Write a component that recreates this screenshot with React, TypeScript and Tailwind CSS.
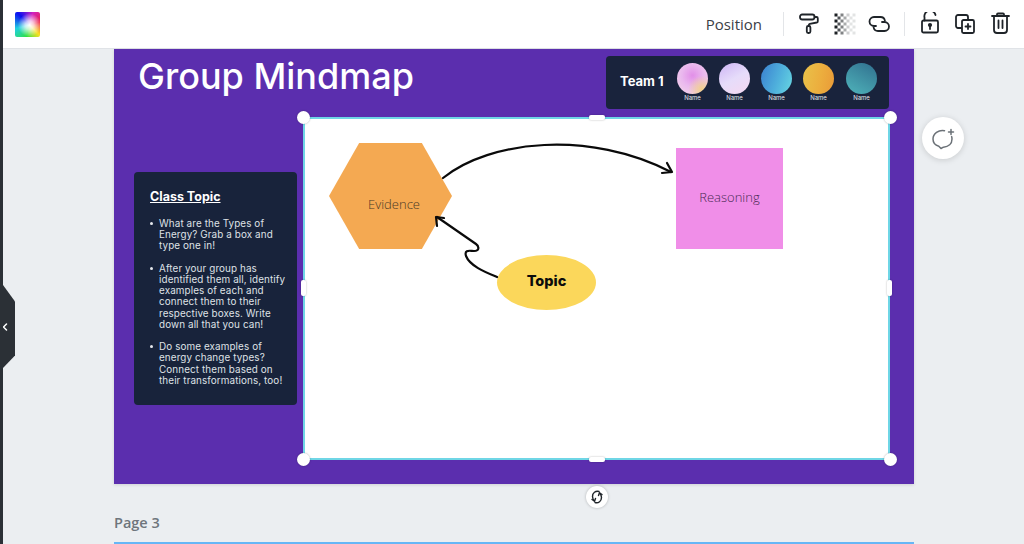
import React from "react";

const people = [
  "bg-[radial-gradient(circle_at_80%_85%,#f2d08a_0%,transparent_38%),radial-gradient(circle_at_50%_40%,#e28fe8_0%,#eab8ee_45%,#f5d9e8_100%)]",
  "bg-[linear-gradient(150deg,#cdb4f5_0%,#e6dcfa_50%,#f6d8f0_100%)]",
  "bg-[linear-gradient(110deg,#3a7fd0_0%,#4fb0dc_55%,#68d8e2_100%)]",
  "bg-[linear-gradient(100deg,#e9c24a_0%,#ecae3e_55%,#e99a38_100%)]",
  "bg-[linear-gradient(30deg,#4fb4bb_0%,#3d8ba0_60%,#2f6e8e_100%)]",
];

const bullets = [
  "What are the Types of Energy? Grab a box and type one in!",
  "After your group has identified them all, identify examples of each and connect them to their respective boxes. Write down all that you can!",
  "Do some examples of energy change types? Connect them based on their transformations, too!",
];

function Checker() {
  const cells: [number, number, number][] = [];
  for (let r = 0; r < 7; r++) {
    for (let c = 0; c < 7; c++) {
      if ((r + c) % 2 === 0) cells.push([c, r, Math.max(0.12, Math.pow(1 - c / 6.5, 1.6))]);
    }
  }
  return (
    <svg width="24" height="24" viewBox="0 0 24 24">
      {cells.map(([c, r, o]) => (
        <rect key={`${c}-${r}`} x={1.5 + c * 3} y={1.5 + r * 3} width="3" height="3" fill="#1c2024" opacity={o} />
      ))}
    </svg>
  );
}

const iconStroke = { fill: "none", stroke: "#1f2429", strokeWidth: 1.8, strokeLinecap: "round", strokeLinejoin: "round" } as const;

export default function App() {
  return (
    <div className="flex h-[544px] w-[1024px] overflow-hidden bg-[#ebeef1] font-['Open_Sans',sans-serif]">
      <div className="w-[3px] shrink-0 bg-[#2b3036]" />
      <div className="relative flex min-w-0 flex-1 flex-col">
        <header className="flex h-[49px] shrink-0 items-center border-b border-[#e0e3e7] bg-white pl-3 pr-3">
          <div className="h-[25px] w-[25px] rounded-[2px] bg-[radial-gradient(circle_at_58%_52%,#ffffff_0%,rgba(255,255,255,0.75)_22%,transparent_60%),conic-gradient(from_315deg_at_58%_52%,#0a10f0,#d020c0,#f02040,#f8e020,#30e040,#20d0e0,#0a10f0)]" />
          <div className="ml-auto flex items-center">
            <span className="text-[15px] font-medium leading-6 text-[#3b4046]">Position</span>
            <div className="ml-[21px] h-[24px] w-px bg-[#e3e5e8]" />
            <svg className="ml-[13px]" width="24" height="24" viewBox="0 0 24 24" {...iconStroke}>
              <rect x="3" y="2.500" width="14.500" height="5" rx="2.200" />
              <path d="M17.500 5h2a1.300 1.300 0 0 1 1.300 1.300v2.900a1.300 1.300 0 0 1-1 1.300l-7 1.300a1.300 1.300 0 0 0-1 1.200v.8" />
              <rect x="9.800" y="14" width="3.600" height="7" rx="1.500" />
            </svg>
            <div className="ml-3">
              <Checker />
            </div>
            <svg className="ml-[11px]" width="24" height="24" viewBox="0 0 24 24" {...iconStroke}>
              <path d="M8 14H6a4.500 4.500 0 0 1 0-9h6.500a4.500 4.500 0 0 1 4.400 3.600" />
              <path d="M14 10h2.500a4.500 4.500 0 0 1 0 9H10a4.500 4.500 0 0 1-4.400-3.600" />
            </svg>
            <div className="ml-3 h-[24px] w-px bg-[#e3e5e8]" />
            <svg className="ml-[13px]" width="24" height="24" viewBox="0 0 24 24" {...iconStroke}>
              <path d="M6.500 8.500V5.500A5.500 5.500 0 0 1 17.500 3" />
              <rect x="4" y="8.500" width="16" height="12" rx="1.500" />
              <circle cx="12" cy="13" r="1.200" fill="#1f2429" />
              <path d="M12 13.500v3.500" />
            </svg>
            <svg className="ml-[11px]" width="24" height="24" viewBox="0 0 24 24" {...iconStroke}>
              <path d="M8 16H5a2 2 0 0 1-2-2V5a2 2 0 0 1 2-2h8a2 2 0 0 1 2 2v3" />
              <rect x="9" y="8" width="12" height="13" rx="1.500" />
              <path d="M15 12v5M12.500 14.500h5" />
            </svg>
            <svg className="ml-[11px]" width="24" height="24" viewBox="0 0 24 24" {...iconStroke}>
              <path d="M4 4h17M9 3.500V2.500a1 1 0 0 1 1-1h5a1 1 0 0 1 1 1v1" />
              <path d="M6 4v14a3 3 0 0 0 3 3h7a3 3 0 0 0 3-3V4" />
              <path d="M10.500 8.500v7.500M14.500 8.500v7.500" />
            </svg>
          </div>
        </header>

        <main className="flex flex-1 flex-col pl-[111px]">
          <section className="relative h-[435px] w-[800px] shrink-0 bg-[#5b2eae] pl-5 pr-[25px] pt-[7px] shadow-[0_1px_3px_rgba(0,0,0,0.12)]">
            <div className="flex h-[53px] items-start justify-between">
              <h1 className="ml-1 mt-[-2px] font-['Inter',sans-serif] text-[36px] font-medium leading-[44px] text-white">
                Group Mindmap
              </h1>
              <div className="flex h-[53px] w-[283px] items-start rounded-[4px] bg-[#19233c] pl-[14px] pt-[7px]">
                <span className="mt-[10px] w-[43px] whitespace-nowrap font-['Inter',sans-serif] text-[13px] font-bold leading-4 text-white">
                  Team 1
                </span>
                <div className="ml-[14px] flex gap-[11px]">
                  {people.map((p, i) => (
                    <div key={i} className={`flex w-[31px] flex-col items-center ${i === 4 ? "ml-[1px]" : ""}`}>
                      <div className={`h-[31px] w-[31px] rounded-full ${p}`} />
                      <span className="font-['Inter',sans-serif] text-[6px] leading-2 text-[#e6e8ec]">Name</span>
                    </div>
                  ))}
                </div>
              </div>
            </div>

            <div className="mt-2 flex items-start gap-[6px]">
              <aside className="mt-[55px] h-[233px] w-[163px] shrink-0 rounded-[4px] bg-[#18233b] pl-4 pr-2 pt-[17px]">
                <h2 className="font-['Inter',sans-serif] text-[12.500px] font-bold leading-4 text-white underline">Class Topic</h2>
                <ul className="mt-[13px] flex flex-col gap-[11.200px] font-['Inter',sans-serif] text-[9.900px] leading-[11.200px] tracking-[0.100px] text-[#dfe1e6]">
                  {bullets.map((b) => (
                    <li key={b} className="relative pl-[9px] before:absolute before:left-0 before:top-1 before:h-[3px] before:w-[3px] before:rounded-full before:bg-[#e6e8ec]">
                      {b}
                    </li>
                  ))}
                </ul>
              </aside>

              <div className="relative h-[343px] w-[587px] shrink-0 border-2 border-[#6fd6e6] bg-white">
                {/* free canvas of the mind map: offsets are from the board's padding box */}
                <div className="absolute left-[24px] top-[24px] flex h-[106px] w-[123px] items-center justify-center bg-[#f4a952] text-[13px] font-light text-[#4a3a26] [clip-path:polygon(24.500%_0,75.500%_0,100%_50%,75.500%_100%,24.500%_100%,0_50%)]">
                  <span className="ml-[7px] mt-[17px]">Evidence</span>
                </div>
                <div className="absolute left-[371px] top-[29px] flex h-[101px] w-[107px] items-center justify-center bg-[#f08ee8] pb-[1px] text-[13px] font-light text-[#4a2b55]">
                  Reasoning
                </div>
                <div className="absolute left-[192px] top-[136px] flex h-[55px] w-[99px] items-center justify-center rounded-[50%] bg-[#fbd75b] pb-[3px] font-['Inter',sans-serif] text-[14.500px] font-extrabold text-[#0c0c0c]">
                  Topic
                </div>
                <svg className="absolute left-[-2px] top-[-2px]" width="587" height="343" viewBox="303 117 587 343" fill="none" stroke="#0a0a0a" strokeWidth="2.200" strokeLinecap="round" strokeLinejoin="round">
                  <path d="M443 178C490 140 590 130 671 172" />
                  <path d="M667 163L672 172L662 173" />
                  <path d="M497 277C485 272 470 266 466 256C464 249 470 251 474 251C480 251 479 246 476 244L437 217" />
                  <path d="M437 226L436 217L444 218" />
                </svg>
              </div>
            </div>

            {/* selection handles lying over the slide */}
            <span className="absolute left-[183px] top-[62px] h-[13px] w-[13px] rounded-full bg-white shadow-[0_0_2px_rgba(0,0,0,0.3)]" />
            <span className="absolute left-[770px] top-[62px] h-[13px] w-[13px] rounded-full bg-white shadow-[0_0_2px_rgba(0,0,0,0.3)]" />
            <span className="absolute left-[183px] top-[404px] h-[13px] w-[13px] rounded-full bg-white shadow-[0_0_2px_rgba(0,0,0,0.3)]" />
            <span className="absolute left-[770px] top-[404px] h-[13px] w-[13px] rounded-full bg-white shadow-[0_0_2px_rgba(0,0,0,0.3)]" />
            <span className="absolute left-[475px] top-[66px] h-[5px] w-4 rounded-[2px] bg-white shadow-[0_0_2px_rgba(0,0,0,0.3)]" />
            <span className="absolute left-[475px] top-[408px] h-[5px] w-4 rounded-[2px] bg-white shadow-[0_0_2px_rgba(0,0,0,0.3)]" />
            <span className="absolute left-[187px] top-[231px] h-4 w-[5px] rounded-[2px] bg-white shadow-[0_0_2px_rgba(0,0,0,0.3)]" />
            <span className="absolute left-[773px] top-[231px] h-4 w-[5px] rounded-[2px] bg-white shadow-[0_0_2px_rgba(0,0,0,0.3)]" />

            <button className="absolute left-[472px] top-[437px] flex h-[22px] w-[22px] items-center justify-center rounded-full bg-white shadow-[0_0_3px_rgba(0,0,0,0.25)]">
              <svg width="16" height="16" viewBox="0 0 16 16" fill="none" stroke="#1f2429" strokeWidth="1.400" strokeLinecap="round" strokeLinejoin="round">
                <path d="M10 2.500C6.500 1.500 3.500 4 3.500 7.500C3.500 9.500 4.500 11 5.500 12" />
                <path d="M6 13.500C9.500 14.500 12.500 12 12.500 8.500C12.500 6.500 11.500 5 10.500 4" />
                <path d="M3 10.500L5.500 12.200L6.500 9.500M13 5.500L10.500 3.800L9.500 6.500" />
              </svg>
            </button>
            <button className="absolute left-[808px] top-[68px] flex h-[42px] w-[42px] items-center justify-center rounded-full bg-white shadow-[0_1px_6px_rgba(0,0,0,0.15)]">
              <svg width="24" height="24" viewBox="0 0 24 24" fill="none" stroke="#6b7177" strokeWidth="1.500" strokeLinecap="round" strokeLinejoin="round">
                <path d="M13.500 4.700A9.500 8.500 0 0 0 2 13c0 3.600 2.500 6.300 5.800 7.300L10 22.500l2.400-1.300C17.500 21 21 17.800 21 13c0-.9-.1-1.600-.4-2.400" />
                <path d="M20 3.500v5M17.500 6h5" />
              </svg>
            </button>
          </section>

          <p className="mt-[29px] text-[14.500px] font-semibold leading-5 text-[#6e757c]">Page 3</p>
          <div className="mt-[9px] h-[2px] w-[800px] shrink-0 bg-[#66b6f6]" />
        </main>
      </div>

      <div className="absolute left-[3px] top-[285px] flex h-[83px] w-[12px] items-center bg-[#2b3036] [clip-path:polygon(0_0,100%_20%,100%_85%,0_100%)]">
        <svg className="ml-[-2px]" width="8" height="10" viewBox="0 0 8 10" fill="none" stroke="#ffffff" strokeWidth="1.500" strokeLinecap="round" strokeLinejoin="round">
          <path d="M5.500 2L2.500 5L5.500 8" />
        </svg>
      </div>
    </div>
  );
}
